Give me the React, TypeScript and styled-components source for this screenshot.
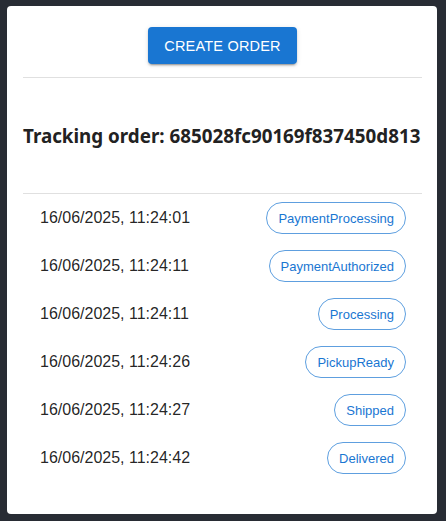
import React from "react";
import styled, { createGlobalStyle } from "styled-components";

const Global = createGlobalStyle`
  html, body { margin: 0; padding: 0; background: #282c34; }
  body { font-family: "Liberation Sans", Arial, sans-serif; }
`;

const Page = styled.div`
  padding: 6px 9px 7px 7px;
  min-height: 521px;
  box-sizing: border-box;
`;

const Card = styled.div`
  background: #fff;
  border-radius: 4px;
  padding: 21px 15px 40px 16px;
  display: flex;
  flex-direction: column;
`;

const Toolbar = styled.div`
  display: flex;
  justify-content: center;
  padding-bottom: 13px;
  border-bottom: 1px solid #e0e0e0;
`;

const Button = styled.button`
  height: 37px;
  padding: 0 16px;
  border: none;
  border-radius: 4px;
  background: #1976d2;
  color: #fff;
  font-family: "Liberation Sans", Arial, sans-serif;
  font-size: 14.5px;
  letter-spacing: 0.2px;
  text-transform: uppercase;
  box-shadow: 0px 3px 1px -2px rgba(0,0,0,0.2), 0px 2px 2px 0px rgba(0,0,0,0.14), 0px 1px 5px 0px rgba(0,0,0,0.12);
  cursor: pointer;
`;

const Title = styled.h3`
  margin: 0;
  height: 115px;
  display: flex;
  align-items: center;
  font-family: "Noto Sans", "Open Sans", sans-serif;
  font-weight: 700;
  font-size: 18.8px;
  color: #222;
  border-bottom: 1px solid #e0e0e0;
  white-space: nowrap;
`;

const List = styled.ul`
  list-style: none;
  margin: 0;
  padding: 8px 0 0;
  display: flex;
  flex-direction: column;
  gap: 16px;
`;

const Row = styled.li`
  display: flex;
  align-items: center;
  justify-content: space-between;
  height: 32px;
  padding: 0 16px 0 17px;
`;

const Stamp = styled.span`
  font-size: 16px;
  color: rgba(0, 0, 0, 0.87);
`;

const Chip = styled.span`
  display: inline-flex;
  align-items: center;
  height: 32px;
  box-sizing: border-box;
  padding: 0 11px;
  border: 1px solid rgba(25, 118, 210, 0.7);
  border-radius: 16px;
  color: #1976d2;
  font-size: 13px;
`;

const events = [
  ["16/06/2025, 11:24:01", "PaymentProcessing"],
  ["16/06/2025, 11:24:11", "PaymentAuthorized"],
  ["16/06/2025, 11:24:11", "Processing"],
  ["16/06/2025, 11:24:26", "PickupReady"],
  ["16/06/2025, 11:24:27", "Shipped"],
  ["16/06/2025, 11:24:42", "Delivered"],
];

export default function App() {
  return (
    <>
      <Global />
      <Page>
        <Card>
          <Toolbar>
            <Button>Create Order</Button>
          </Toolbar>
          <Title>Tracking order: 685028fc90169f837450d813</Title>
          <List>
            {events.map(([t, s], i) => (
              <Row key={i}>
                <Stamp>{t}</Stamp>
                <Chip>{s}</Chip>
              </Row>
            ))}
          </List>
        </Card>
      </Page>
    </>
  );
}
